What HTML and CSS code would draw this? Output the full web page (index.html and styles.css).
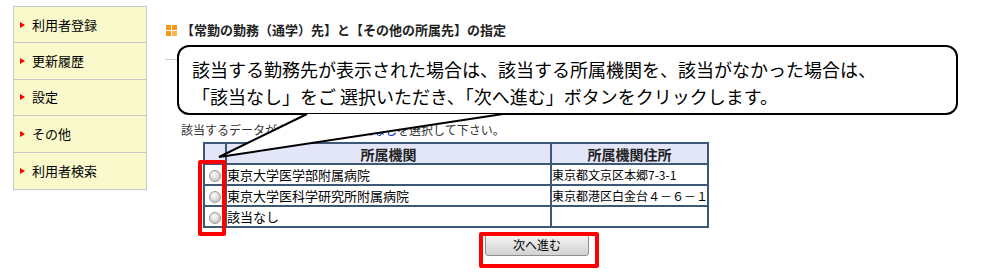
FILE: index.html
```html
<!DOCTYPE html>
<html lang="ja">
<head>
    <meta charset="UTF-8">
    <title>所属機関の指定</title>
    <link rel="stylesheet" href="styles.css">
</head>
<body>

    <div class="pagina">
        <ul class="menu">
            <li class="menu-item">利用者登録</li>
            <li class="menu-item">更新履歴</li>
            <li class="menu-item">設定</li>
            <li class="menu-item">その他</li>
            <li class="menu-item">利用者検索</li>
        </ul>

        <div class="contenido">
            <h2 class="titulo"><span class="icono"><i></i><i></i><i></i><i></i></span>【常勤の勤務（通学）先】と【その他の所属先】の指定</h2>
            <div class="linea"></div>

            <p class="aviso">該当するデータがない場合は、<a href="#" class="enlace">該当なし</a>を選択して下さい。</p>

            <table class="tabla">
                <tr>
                    <th class="col-radio"></th>
                    <th class="col-nombre">所属機関</th>
                    <th class="col-dir">所属機関住所</th>
                </tr>
                <tr>
                    <td class="col-radio"><input type="radio" name="kikan"></td>
                    <td>東京大学医学部附属病院</td>
                    <td class="dir">東京都文京区本郷7-3-1</td>
                </tr>
                <tr>
                    <td class="col-radio"><input type="radio" name="kikan"></td>
                    <td>東京大学医科学研究所附属病院</td>
                    <td class="dir">東京都港区白金台４－６－１</td>
                </tr>
                <tr>
                    <td class="col-radio"><input type="radio" name="kikan"></td>
                    <td>該当なし</td>
                    <td class="dir"></td>
                </tr>
            </table>

            <button class="boton">次へ進む</button>
        </div>
    </div>

    <!-- globo de ayuda y marcas rojas, encima del contenido -->
    <div class="globo">
        <p>該当する勤務先が表示された場合は、該当する所属機関を、該当がなかった場合は、</p>
        <p>「該当なし」をご 選択いただき、「次へ進む」ボタンをクリックします。</p>
    </div>
    <svg class="cola" width="982" height="272" viewBox="0 0 982 272">
        <polygon points="307,114 219,157 503,114" fill="#fff"/>
        <polyline points="307,114 219,157 503,114" fill="none" stroke="#000" stroke-width="2" stroke-linejoin="miter"/>
    </svg>
    <div class="marca marca-radios"></div>
    <div class="marca marca-boton"></div>

</body>
</html>
```

FILE: styles.css
```css
* {
    margin: 0;
    padding: 0;
    box-sizing: border-box;
}
body {
    background-color: #fff;
    font-family: "Noto Sans CJK JP", sans-serif;
    color: #000;
    width: 982px;
    height: 272px;
    overflow: hidden;
    position: relative;
}

.pagina {
    display: flex;
    align-items: flex-start;
    padding: 6px 0 0 13px;
}

.menu {
    list-style: none;
    width: 134px;
    border: 1px solid #c8c8c8;
    background-color: #f9f9cb;
}

.menu-item {
    height: 36.4px;
    display: flex;
    align-items: center;
    padding-left: 18px;
    font-size: 13px;
    line-height: 16px;
    border-bottom: 1px solid #c8c8c8;
    position: relative;
}
.menu-item:last-child {
    border-bottom: none;
}
.menu-item::before {
    content: "";
    position: absolute;
    left: 6px;
    top: 50%;
    margin-top: -3px;
    border-left: 5px solid #f00;
    border-top: 3px solid transparent;
    border-bottom: 3px solid transparent;
}

.contenido {
    margin-left: 18px;
    flex: 1;
}

.titulo {
    margin-top: 16px;
    font-size: 13px;
    line-height: 16px;
    font-weight: bold;
    display: flex;
    align-items: center;
    color: #222;
}
.icono {
    display: grid;
    grid-template-columns: 5px 5px;
    gap: 1px;
    margin: 0 4px 0 1px;
}
.icono i {
    width: 5px;
    height: 5px;
    background-color: #f59a16;
}
.icono i:nth-child(4) {
    background-color: #f7b552;
}

.linea {
    margin-top: 21px;
    border-top: 1px solid #ccc;
    width: 720px;
}

.aviso {
    margin-top: 62px;
    margin-left: 16px;
    font-size: 12px;
    line-height: 16px;
    color: #333;
}
.enlace {
    color: #0022cc;
    text-decoration: none;
}

.tabla {
    margin: 4px 0 0 38px;
    width: 506px;
    table-layout: fixed;
    border-collapse: separate;
    border-spacing: 0;
    border: 1px solid #3b5876;
    font-size: 13px;
}
.tabla th,
.tabla td {
    border: 1px solid #3b5876;
    height: 21px;
    line-height: 16px;
    padding: 0;
    text-align: left;
    white-space: nowrap;
    overflow: hidden;
}
.tabla th {
    background-color: #e3e5f8;
    text-align: center;
    font-size: 14px;
    color: #222;
}
.col-radio {
    width: 22px;
}
.col-nombre {
    width: 325px;
}
.tabla .dir {
    font-size: 12px;
    letter-spacing: 0;
}
.tabla input[type="radio"] {
    appearance: none;
    width: 12px;
    height: 12px;
    border-radius: 50%;
    border: 1px solid #999;
    background: radial-gradient(circle at 40% 35%, #fff 0, #ddd 45%, #b8b8b8 100%);
    display: block;
    margin: 3px 0 0 4px;
}

.boton {
    margin: 5px 0 0 320px;
    width: 104px;
    height: 23px;
    font-family: "Noto Sans CJK JP", sans-serif;
    font-size: 12px;
    border: 1px solid #8f8f8f;
    border-radius: 3px;
    background: linear-gradient(#f6f6f6, #e4e4e4 50%, #d2d2d2);
    color: #000;
}

.globo {
    position: absolute;
    left: 177px;
    top: 45px;
    width: 781px;
    height: 70px;
    border: 2px solid #000;
    border-radius: 12px;
    background-color: #fff;
    padding: 9px 0 0 13px;
    font-size: 18px;
    line-height: 27px;
}

.cola {
    position: absolute;
    left: 0;
    top: 0;
    pointer-events: none;
}

.marca {
    position: absolute;
    border: 4px solid #f00;
    border-radius: 2px;
}
.marca-radios {
    left: 198px;
    top: 160px;
    width: 28px;
    height: 76px;
}
.marca-boton {
    left: 479px;
    top: 232px;
    width: 120px;
    height: 36px;
}
```
